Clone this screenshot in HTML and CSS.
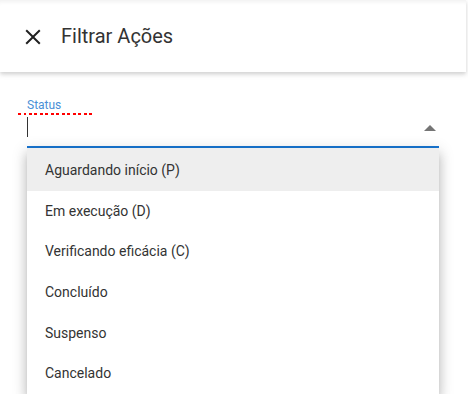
FILE: index.html
```html
<!DOCTYPE html>
<html lang="pt">
<head>
<meta charset="utf-8">
<link rel="stylesheet" href="styles.css">
</head>
<body>
<header class="header">
  <svg class="close" width="24" height="24" viewBox="0 0 24 24"><path d="M19.5 5.9 18.1 4.5 12 10.6 5.9 4.5 4.5 5.9 10.6 12 4.5 18.1 5.9 19.5 12 13.4 18.1 19.5 19.5 18.1 13.4 12z" fill="#212121"/></svg>
  <h1 class="title">Filtrar Ações</h1>
</header>
<main class="field">
  <div class="label">Status</div>
  <div class="spell"></div>
  <div class="input">
    <span class="caret"></span>
    <span class="arrow"></span>
  </div>
  <ul class="menu">
    <li class="item active">Aguardando início (P)</li>
    <li class="item">Em execução (D)</li>
    <li class="item">Verificando eficácia (C)</li>
    <li class="item">Concluído</li>
    <li class="item">Suspenso</li>
    <li class="item">Cancelado</li>
  </ul>
</main>
</body>
</html>
```
FILE: styles.css
```css
html, body {
  margin: 0;
  padding: 0;
  background: #ffffff;
  font-family: Roboto, "Liberation Sans", sans-serif;
  color: rgba(0, 0, 0, 0.87);
}
.header {
  width: 466px;
  height: 72px;
  display: flex;
  align-items: center;
  padding-left: 21px;
  box-sizing: border-box;
  background: #fff;
  box-shadow: 0 2px 4px rgba(0, 0, 0, 0.14), 0 3px 6px rgba(0, 0, 0, 0.06), inset 0 5px 4px -3px rgba(0, 0, 0, 0.06);
}
.close {
  display: block;
  margin-top: 1px;
}
.title {
  margin: 0 0 0 16px;
  font-size: 20px;
  font-weight: 400;
  color: #333;
  line-height: 24px;
}
.field {
  width: 412px;
  margin-left: 27px;
  padding-top: 26px;
}
.label {
  font-size: 12px;
  line-height: 14px;
  color: #4a8fd6;
}
.spell {
  width: 76px;
  height: 2px;
  margin-left: -9px;
  margin-top: 1px;
  background: repeating-linear-gradient(90deg, #ff0000 0 3px, transparent 3px 5.5px);
}
.input {
  height: 29px;
  display: flex;
  align-items: flex-start;
  justify-content: space-between;
  border-bottom: 2px solid #1976d2;
  padding-top: 2px;
}
.caret {
  width: 1px;
  height: 20px;
  background: #333;
}
.arrow {
  width: 0;
  height: 0;
  margin-top: 8px;
  margin-right: 3px;
  border-left: 6px solid transparent;
  border-right: 6px solid transparent;
  border-bottom: 6px solid #757575;
}
.menu {
  list-style: none;
  margin: 0;
  padding: 0;
  background: #fff;
  box-shadow: 0 5px 5px -3px rgba(0, 0, 0, 0.2), 0 8px 10px 1px rgba(0, 0, 0, 0.14), 0 3px 14px 2px rgba(0, 0, 0, 0.12);
}
.item {
  height: 40.6px;
  box-sizing: border-box;
  display: flex;
  align-items: center;
  padding-left: 18px;
  font-size: 14px;
  color: #333;
}
.item.active {
  height: 42.6px;
  padding-top: 2px;
  background: #eeeeee;
}
```
